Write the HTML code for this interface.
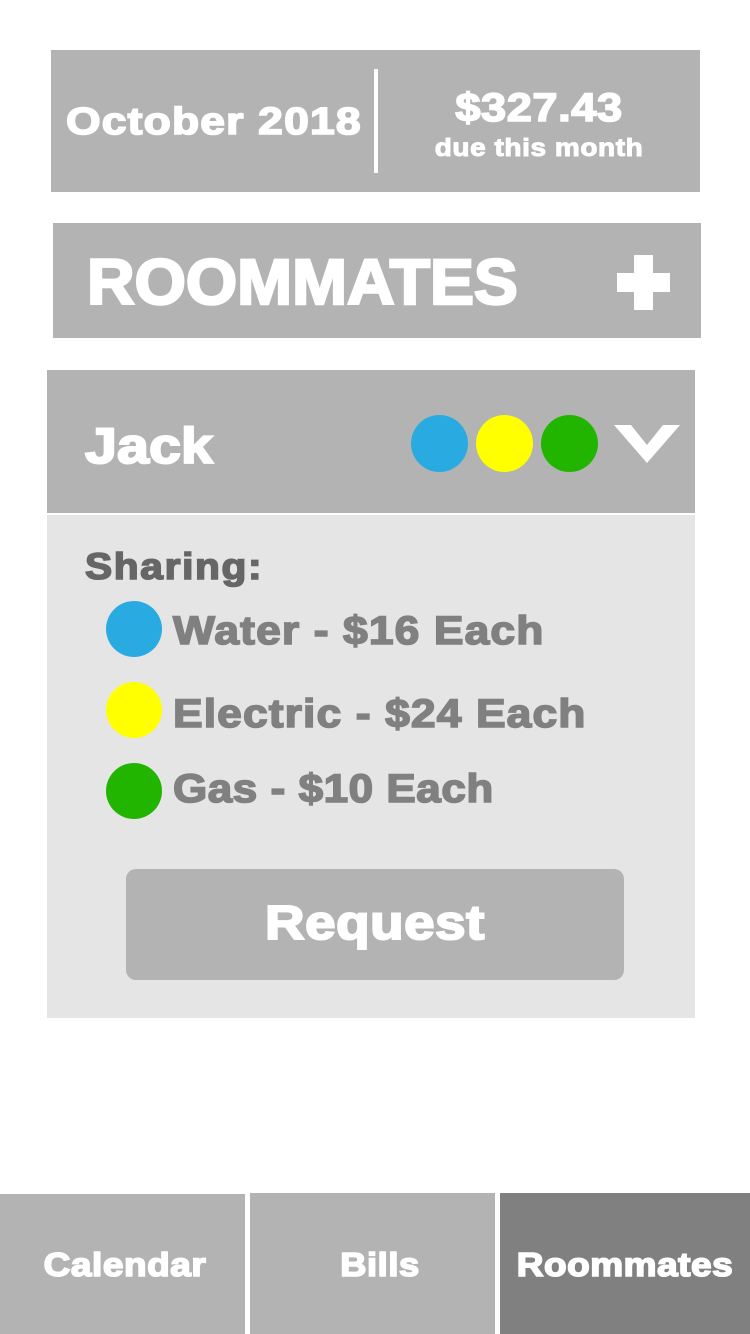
<!DOCTYPE html>
<html><head><style>
body{margin:0;width:750px;height:1334px;background:#fff;position:relative;overflow:hidden;font-family:"Liberation Sans",Arial,sans-serif;font-weight:bold;}
.a{position:absolute;}
.g{background:#b3b3b3;}
.w{color:#fff;white-space:nowrap;}
.c{border-radius:50%;}
.t{-webkit-text-stroke:1.6px currentColor;}
</style></head><body>
<div class="a g" style="left:51px;top:50px;width:649px;height:142px"></div>
<div class="a" style="left:374px;top:69px;width:4px;height:104px;background:#fff"></div>
<div class="a w t" style="left:66px;top:101px;font-size:38px;letter-spacing:1px;transform:scaleX(1.17);transform-origin:left">October 2018</div>
<div class="a w t" style="left:378px;width:322px;text-align:center;top:86px;font-size:40px;letter-spacing:0.5px;transform:scaleX(1.13)">$327.43</div>
<div class="a w t" style="left:378px;width:322px;text-align:center;top:134px;font-size:25px;letter-spacing:0.5px;transform:scaleX(1.12);-webkit-text-stroke:1px #fff">due this month</div>

<div class="a g" style="left:53px;top:223px;width:648px;height:115px"></div>
<div class="a w t" style="left:87px;top:245px;font-size:64px;letter-spacing:0px;transform:scaleX(1.03);transform-origin:left;-webkit-text-stroke:2.5px #fff">ROOMMATES</div>
<div class="a" style="left:617px;top:273px;width:53px;height:19px;background:#fff"></div>
<div class="a" style="left:634px;top:255px;width:19px;height:55px;background:#fff"></div>

<div class="a g" style="left:47px;top:370px;width:648px;height:143px"></div>
<div class="a w t" style="left:85px;top:417px;font-size:50px;letter-spacing:0px;transform:scaleX(1.15);transform-origin:left;-webkit-text-stroke:2px #fff">Jack</div>
<div class="a c" style="left:411px;top:415px;width:57px;height:57px;background:#29abe2"></div>
<div class="a c" style="left:476px;top:415px;width:57px;height:57px;background:#ffff00"></div>
<div class="a c" style="left:541px;top:415px;width:57px;height:57px;background:#22b500"></div>
<svg class="a" style="left:614px;top:425px" width="66" height="38"><polygon points="0,0 17,0 33,20 49,0 66,0 33,38" fill="#fff"/></svg>

<div class="a" style="left:47px;top:515px;width:648px;height:503px;background:#e5e5e5"></div>
<div class="a t" style="left:85px;top:546px;font-size:37px;color:#666;letter-spacing:1.5px;transform:scaleX(1.1);transform-origin:left">Sharing:</div>
<div class="a c" style="left:106px;top:601px;width:56px;height:56px;background:#29abe2"></div>
<div class="a c" style="left:106px;top:682px;width:56px;height:56px;background:#ffff00"></div>
<div class="a c" style="left:106px;top:763px;width:56px;height:56px;background:#22b500"></div>
<div class="a t" style="left:173px;top:609px;font-size:40px;color:#808080;letter-spacing:1px;white-space:nowrap;transform:scaleX(1.11);transform-origin:left">Water - $16 Each</div>
<div class="a t" style="left:173px;top:692px;font-size:40px;color:#808080;letter-spacing:1px;white-space:nowrap;transform:scaleX(1.11);transform-origin:left">Electric - $24 Each</div>
<div class="a t" style="left:173px;top:767px;font-size:40px;color:#808080;letter-spacing:0.5px;white-space:nowrap;transform:scaleX(1.1);transform-origin:left">Gas - $10 Each</div>
<div class="a g" style="left:126px;top:869px;width:498px;height:111px;border-radius:10px"></div>
<div class="a w t" style="left:126px;width:498px;text-align:center;top:896px;font-size:48px;letter-spacing:0.5px;transform:scaleX(1.14);-webkit-text-stroke:2px #fff">Request</div>

<div class="a g" style="left:0;top:1194px;width:245px;height:140px"></div>
<div class="a g" style="left:250px;top:1193px;width:245px;height:141px"></div>
<div class="a" style="left:500px;top:1193px;width:250px;height:141px;background:#808080"></div>
<div class="a w t" style="left:0;width:250px;text-align:center;top:1246px;font-size:33px;letter-spacing:0.5px;transform:scaleX(1.12)">Calendar</div>
<div class="a w t" style="left:255px;width:250px;text-align:center;top:1246px;font-size:33px;letter-spacing:0.5px;transform:scaleX(1.1)">Bills</div>
<div class="a w t" style="left:500px;width:250px;text-align:center;top:1246px;font-size:33px;letter-spacing:0.5px;transform:scaleX(1.12)">Roommates</div>
</body></html>
